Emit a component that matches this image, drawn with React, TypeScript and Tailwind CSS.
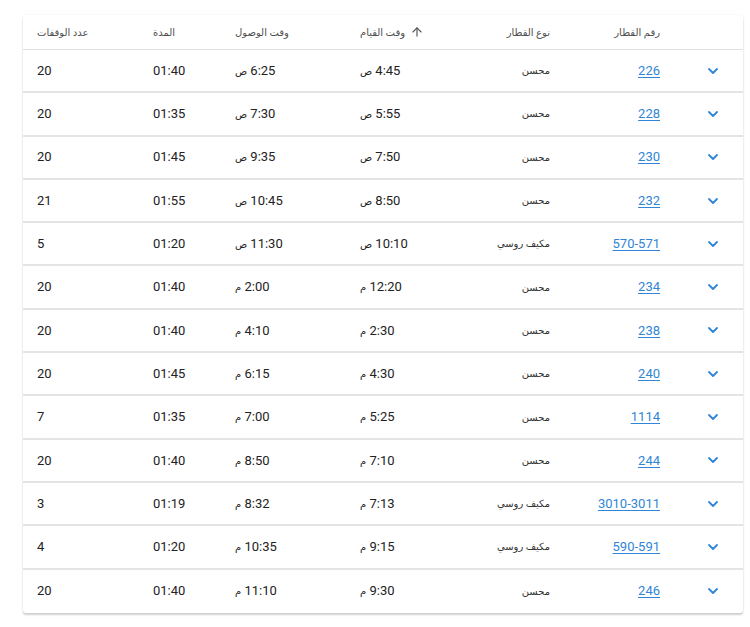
import React from "react";
import { ArrowUp, ChevronDown } from "lucide-react";

type Train = {
  no: string;
  kind: string;
  dep: string;
  arr: string;
  dur: string;
  stops: number;
};

const trains: Train[] = [
  { no: "226", kind: "محسن", dep: "4:45", arr: "6:25", dur: "01:40", stops: 20 },
  { no: "228", kind: "محسن", dep: "5:55", arr: "7:30", dur: "01:35", stops: 20 },
  { no: "230", kind: "محسن", dep: "7:50", arr: "9:35", dur: "01:45", stops: 20 },
  { no: "232", kind: "محسن", dep: "8:50", arr: "10:45", dur: "01:55", stops: 21 },
  { no: "570-571", kind: "مكيف روسي", dep: "10:10", arr: "11:30", dur: "01:20", stops: 5 },
  { no: "234", kind: "محسن", dep: "12:20", arr: "2:00", dur: "01:40", stops: 20 },
  { no: "238", kind: "محسن", dep: "2:30", arr: "4:10", dur: "01:40", stops: 20 },
  { no: "240", kind: "محسن", dep: "4:30", arr: "6:15", dur: "01:45", stops: 20 },
  { no: "1114", kind: "محسن", dep: "5:25", arr: "7:00", dur: "01:35", stops: 7 },
  { no: "244", kind: "محسن", dep: "7:10", arr: "8:50", dur: "01:40", stops: 20 },
  { no: "3010-3011", kind: "مكيف روسي", dep: "7:13", arr: "8:32", dur: "01:19", stops: 3 },
  { no: "590-591", kind: "مكيف روسي", dep: "9:15", arr: "10:35", dur: "01:20", stops: 4 },
  { no: "246", kind: "محسن", dep: "9:30", arr: "11:10", dur: "01:40", stops: 20 },
];

// morning trains are "ص", afternoon "م"
const suffix = (i: number) => (i < 5 ? "ص" : "م");

function Time({ value, s }: { value: string; s: string }) {
  return (
    <span>
      {value} <span className="text-[10px]">{s}</span>
    </span>
  );
}

export default function App() {
  return (
    <div className="min-h-screen bg-white pt-[15px] pl-[23px] font-['Roboto','DejaVu_Sans',sans-serif]">
      <div
        dir="rtl"
        className="w-[720px] bg-white rounded-[3px] shadow-[0_2px_2px_rgba(0,0,0,0.18),0_0_2px_rgba(0,0,0,0.08)]"
      >
        {/* Header */}
        <div className="flex items-center h-[35px] border-b border-[#e0e0e0] text-[10px] text-[#4f4f4f]">
          <div className="w-[60px]" />
          <div className="w-[110px] pr-[23px] text-right">رقم القطار</div>
          <div className="w-[120px] pr-[23px] text-right">نوع القطار</div>
          <div className="w-[93px] flex items-center justify-end gap-[5px]">
            <ArrowUp size={14} strokeWidth={2} className="text-[#555]" />
            <span>وقت القيام</span>
          </div>
          <div className="w-[125px] text-left">وقت الوصول</div>
          <div className="w-[82px] text-left">المدة</div>
          <div className="w-[130px] pl-[14px] text-left">عدد الوقفات</div>
        </div>

        {/* Rows */}
        {trains.map((t, i) => (
          <div
            key={t.no}
            className={
              "flex items-center h-[43.3px] text-[13px] text-[#222] " +
              (i < trains.length - 1 ? "border-b-2 border-[#e4e4e4]" : "")
            }
          >
            <div className="w-[60px] flex justify-center">
              <ChevronDown size={16} strokeWidth={2.75} className="text-[#2f86d6]" />
            </div>
            <div className="w-[110px] pr-[23px] text-right">
              <a href="#" className="text-[#2f86d6] underline underline-offset-2">
                {t.no}
              </a>
            </div>
            <div className="w-[120px] pr-[23px] text-right text-[10px] text-[#333]">{t.kind}</div>
            <div className="w-[93px] text-left">
              <Time value={t.dep} s={suffix(i)} />
            </div>
            <div className="w-[125px] text-left">
              <Time value={t.arr} s={suffix(i)} />
            </div>
            <div className="w-[82px] text-left">{t.dur}</div>
            <div className="w-[130px] pl-[14px] text-left">{t.stops}</div>
          </div>
        ))}
      </div>
    </div>
  );
}
